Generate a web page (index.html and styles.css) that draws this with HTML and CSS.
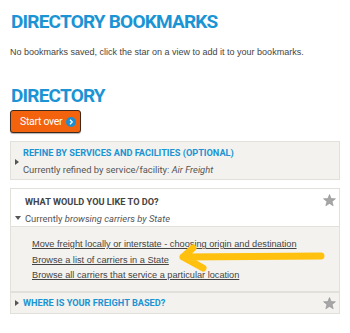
FILE: index.html
```html
<!DOCTYPE html>
<html lang="en">

<head>
    <meta charset="UTF-8">
    <meta name="viewport" content="width=device-width, initial-scale=1.0">
    <title>Directory</title>
    <link rel="stylesheet" href="styles.css">
</head>

<body>

    <h1 class="title">DIRECTORY BOOKMARKS</h1>
    <p class="note">No bookmarks saved, click the star on a view to add it to your bookmarks.</p>

    <h1 class="title">DIRECTORY</h1>
    <button class="start-btn">Start over <span class="go-icon"><svg viewBox="0 0 10 10" width="10" height="10"><circle cx="5" cy="5" r="5" fill="#1b8fd2" /><path d="M4 2.8 L6.2 5 L4 7.2" stroke="#fff" stroke-width="1.3" fill="none" /></svg></span></button>

    <div class="panel">
        <div class="panel-head">
            <span class="tri tri-right"></span>
            <div class="panel-text">
                <div class="panel-title blue">REFINE BY SERVICES AND FACILITIES (OPTIONAL)</div>
                <div class="panel-sub">Currently refined by service/facility: <em>Air Freight</em></div>
            </div>
        </div>
    </div>

    <div class="panel panel-open">
        <div class="panel-head head-white">
            <span class="tri tri-down"></span>
            <div class="panel-text">
                <div class="panel-title">WHAT WOULD YOU LIKE TO DO?</div>
                <div class="panel-sub">Currently <em>browsing carriers by State</em></div>
            </div>
            <span class="star"><svg viewBox="0 0 12 12" width="13" height="13"><path d="M6 0.5 L7.5 4.2 L11.5 4.4 L8.4 6.9 L9.4 10.9 L6 8.7 L2.6 10.9 L3.6 6.9 L0.5 4.4 L4.5 4.2 Z" fill="#a6a6a6" stroke="#8c8c8c" stroke-width="0.5" /></svg></span>
        </div>
        <ul class="links">
            <li><a href="#">Move freight locally or interstate - choosing origin and destination</a></li>
            <li><a href="#">Browse a list of carriers in a State</a></li>
            <li><a href="#">Browse all carriers that service a particular location</a></li>
        </ul>
        <!-- arrow drawn over the list -->
        <svg class="arrow" width="150" height="36" viewBox="0 0 150 36">
            <path d="M4 18 L142 17 M4 18 L14 9 M4 18 L24 29" stroke="#ffc10d" stroke-width="7" stroke-linecap="round" fill="none" />
        </svg>
    </div>

    <div class="panel">
        <div class="panel-head head-short">
            <span class="tri tri-right"></span>
            <div class="panel-text">
                <div class="panel-title blue">WHERE IS YOUR FREIGHT BASED?</div>
            </div>
            <span class="star"><svg viewBox="0 0 12 12" width="13" height="13"><path d="M6 0.5 L7.5 4.2 L11.5 4.4 L8.4 6.9 L9.4 10.9 L6 8.7 L2.6 10.9 L3.6 6.9 L0.5 4.4 L4.5 4.2 Z" fill="#a6a6a6" stroke="#8c8c8c" stroke-width="0.5" /></svg></span>
        </div>
    </div>

</body>

</html>
```

FILE: styles.css
```css
body {
    font-family: "Liberation Sans", Arial, sans-serif;
    margin: 0;
    padding: 10px 10px 0 10px;
    background-color: #fff;
    color: #444;
}

.title {
    font-family: Roboto, sans-serif;
    font-weight: bold;
    font-size: 19px;
    letter-spacing: -0.8px;
    line-height: 24px;
    color: #1b94d4;
    margin: 0 0 0 1px;
}

.note {
    font-size: 9px;
    line-height: 14px;
    margin: 11px 0 25px 0;
}

.start-btn {
    display: flex;
    align-items: center;
    gap: 4px;
    height: 23px;
    padding: 0 4px 0 9px;
    margin: 2px 0 8px 0;
    background-color: #f3620c;
    border: 1px solid #3a2a20;
    border-radius: 3px;
    box-shadow: 0 1px 1px rgba(0, 0, 0, 0.3);
    color: #fff;
    font-family: Roboto, sans-serif;
    font-size: 10.5px;
    letter-spacing: -0.3px;
}

.go-icon {
    display: flex;
}

.panel {
    background-color: #f3f2ee;
    border: 1px solid #e2e0da;
    margin-bottom: 8px;
    position: relative;
}

.panel-open {
    margin-bottom: 0;
}

.panel-head {
    display: flex;
    align-items: center;
    gap: 4px;
    padding: 5px 3px 3px 4px;
}

.head-white {
    background-color: #fff;
    border-bottom: 1px solid #e2e0da;
    padding: 7px 3px 1px 4px;
}

.head-short {
    padding: 4px 3px 3px 4px;
}

.panel-text {
    flex: 1;
}

.panel-title {
    font-family: Roboto, sans-serif;
    font-weight: bold;
    font-size: 9.2px;
    line-height: 12px;
    color: #444;
}

.panel-title.blue {
    color: #1b94d4;
}

.panel-sub {
    font-family: Roboto, sans-serif;
    font-size: 9.4px;
    line-height: 12px;
    margin-top: 5px;
    color: #555;
}

.tri {
    width: 0;
    height: 0;
}

.tri-right {
    border-top: 3px solid transparent;
    border-bottom: 3px solid transparent;
    border-left: 4px solid #555;
}

.tri-down {
    align-self: flex-end;
    margin-bottom: 5px;
    border-left: 3px solid transparent;
    border-right: 3px solid transparent;
    border-top: 4px solid #555;
}

.star {
    align-self: flex-start;
    display: flex;
}

.head-white .star {
    margin-top: -2px;
}

.head-short .star {
    align-self: center;
}

.links {
    list-style: none;
    margin: 0;
    padding: 10px 0 7px 21px;
}

.links li {
    font-size: 9.2px;
    line-height: 15.5px;
}

.links a {
    color: #444;
}

.arrow {
    position: absolute;
    left: 168px;
    top: 50px;
}
```
